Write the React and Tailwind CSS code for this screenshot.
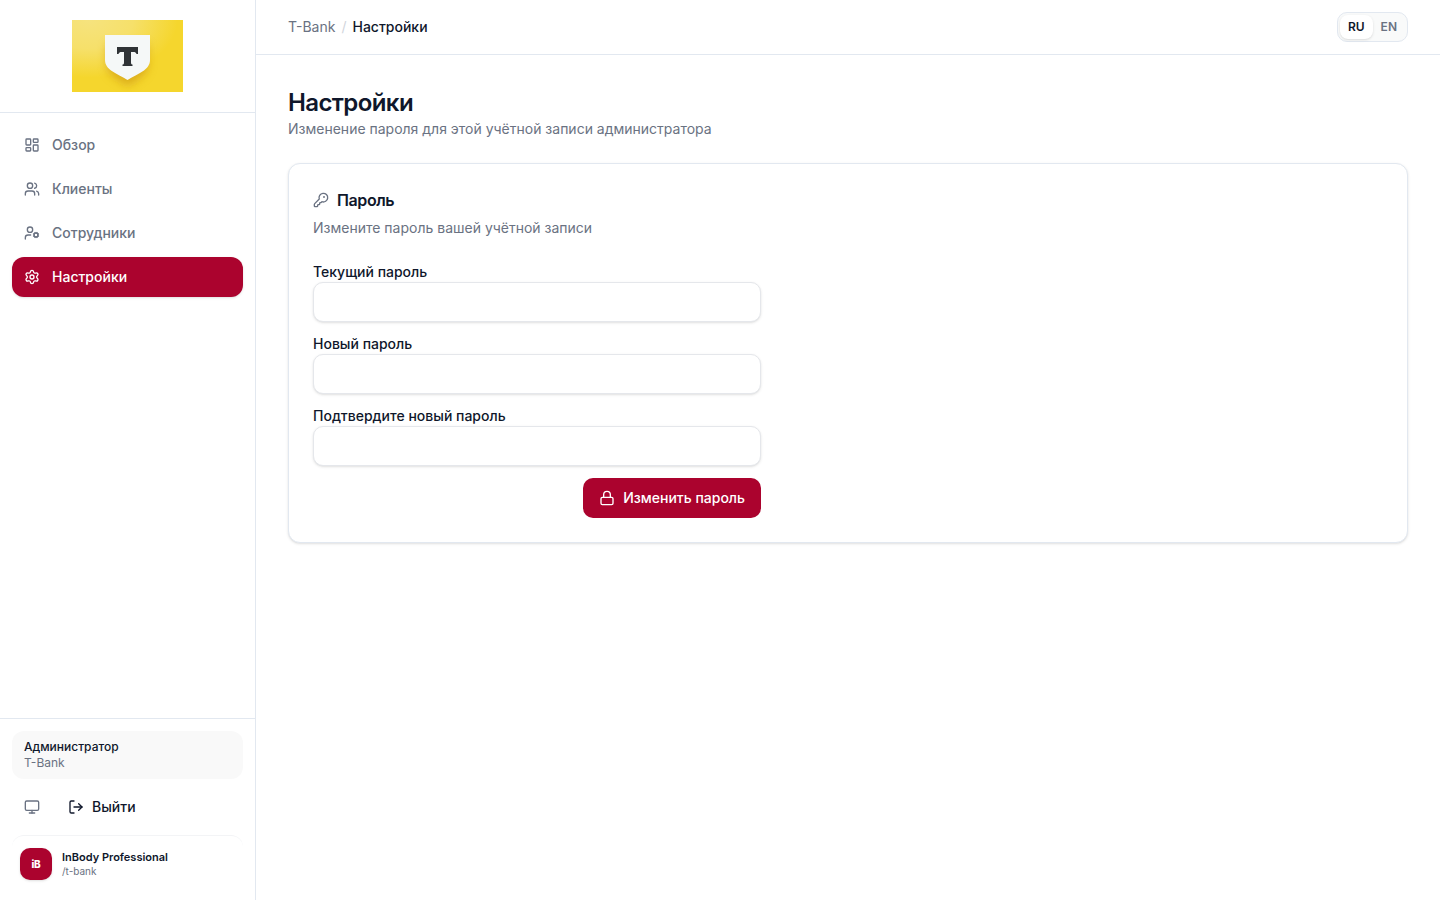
import React, { useState } from 'react';
import {
    LayoutDashboard,
    Users,
    UserCog,
    Settings,
    Monitor,
    LogOut,
    KeyRound,
    Lock,
} from 'lucide-react';

const NAV_ITEMS = [
    { id: 'overview', label: 'Обзор', icon: LayoutDashboard },
    { id: 'clients', label: 'Клиенты', icon: Users },
    { id: 'staff', label: 'Сотрудники', icon: UserCog },
    { id: 'settings', label: 'Настройки', icon: Settings },
];

const FIELDS = [
    { id: 'current-password', label: 'Текущий пароль', autoComplete: 'current-password' },
    { id: 'new-password', label: 'Новый пароль', autoComplete: 'new-password' },
    { id: 'confirm-password', label: 'Подтвердите новый пароль', autoComplete: 'new-password' },
];

const BankLogo = () => (
    <svg width="111" height="72" viewBox="0 0 111 72" role="img" aria-label="T-Bank">
        <defs>
            <radialGradient id="glow" cx="0.15" cy="0" r="0.8">
                <stop offset="0" stopColor="#f6e37e" />
                <stop offset="0.5" stopColor="#f6e06a" />
                <stop offset="1" stopColor="#f5d62d" />
            </radialGradient>
            <filter id="soft" x="-50%" y="-50%" width="200%" height="200%">
                <feGaussianBlur stdDeviation="5" />
            </filter>
        </defs>
        <rect width="111" height="72" fill="url(#glow)" />
        <path d="M35 24h41v22c0 8-12 14-20 20C47 60 35 54 35 46z" fill="#cf9a14" opacity="0.7" filter="url(#soft)" />
        <path d="M33 15h45v25c0 5-3 8-6 10.500C67 54 60 57 55.500 60 51 57 44 54 39 50.500 36 48 33 45 33 40z" fill="#f5f8f8" />
        <path
            d="M45 27h21v7h-1.500c-.5-1.500-1.500-2-3-2H59v10.500c0 1.500.5 2 1.500 2V46h-10v-1.500c1 0 1.500-.5 1.500-2V32h-2.500c-1.500 0-2.500.5-3 2H45z"
            fill="#2f3336"
        />
    </svg>
);

const Sidebar = ({ active, onSelect }) => (
    <aside className="flex w-64 shrink-0 flex-col border-r border-slate-200 bg-white">
        <div className="flex justify-center border-b border-slate-200 py-5">
            <BankLogo />
        </div>

        <nav className="flex flex-1 flex-col gap-1 p-3">
            {NAV_ITEMS.map(({ id, label, icon: Icon }) => (
                <a
                    key={id}
                    href={`#${id}`}
                    onClick={() => onSelect(id)}
                    className={`flex h-10 items-center gap-3 rounded-xl px-3 text-sm font-medium ${
                        active === id ? 'bg-[#ab032e] text-white shadow-sm' : 'text-gray-500 hover:bg-gray-50'
                    }`}
                >
                    <Icon className="size-4" />
                    {label}
                </a>
            ))}
        </nav>

        <div className="border-t border-slate-200 p-3">
            <div className="rounded-xl bg-[#f9f9f9] px-3 py-2 text-xs">
                <p className="font-medium">Администратор</p>
                <p className="text-gray-500">T-Bank</p>
            </div>
            <div className="mt-2 flex items-center gap-1">
                <button type="button" aria-label="Тема" className="flex size-10 items-center justify-center text-gray-500">
                    <Monitor className="size-4" />
                </button>
                <button type="button" className="flex h-10 items-center gap-2 px-3 text-sm font-medium">
                    <LogOut className="size-4" />
                    Выйти
                </button>
            </div>
            <div className="mt-2 flex items-center gap-[10px] rounded-xl border-t border-gray-100 px-2 pt-3 pb-2">
                <span className="flex size-8 items-center justify-center rounded-[10px] bg-[#ab032e] text-[10px] font-extrabold tracking-tight text-white shadow-sm">
                    iB
                </span>
                <div>
                    <p className="text-[11px] leading-[14px] font-semibold">InBody Professional</p>
                    <p className="text-[10px] leading-[15px] text-gray-500">/t-bank</p>
                </div>
            </div>
        </div>
    </aside>
);

const LangSwitch = ({ lang, onChange }) => (
    <div className="flex rounded-[10px] border border-slate-200 bg-[#f9fafa] p-0.5 text-xs font-semibold">
        {['RU', 'EN'].map(code => (
            <button
                key={code}
                type="button"
                onClick={() => onChange(code)}
                className={`h-6 rounded-lg px-2 ${
                    lang === code ? 'bg-white text-slate-900 shadow-sm' : 'text-gray-500'
                }`}
            >
                {code}
            </button>
        ))}
    </div>
);

const PasswordCard = () => (
    <section className="mt-6 rounded-xl border border-slate-200 bg-white p-6 shadow-sm">
        <h2 className="flex items-center gap-2 text-base font-semibold tracking-tight">
            <KeyRound className="size-4 text-gray-500" />
            Пароль
        </h2>
        <p className="mt-1.5 text-sm text-gray-500">Измените пароль вашей учётной записи</p>

        <form className="mt-6 flex max-w-md flex-col gap-3" onSubmit={e => e.preventDefault()}>
            {FIELDS.map(field => (
                <div key={field.id}>
                    <label htmlFor={field.id} className="block text-sm font-medium">
                        {field.label}
                    </label>
                    <input
                        id={field.id}
                        type="password"
                        autoComplete={field.autoComplete}
                        className="block h-10 w-full rounded-[10px] border border-gray-200 bg-white px-3 text-sm shadow-sm outline-none"
                    />
                </div>
            ))}
            <button
                type="submit"
                className="flex h-10 items-center gap-2 self-end rounded-[10px] bg-[#ab032e] px-4 text-sm font-medium text-white"
            >
                <Lock className="size-4" />
                Изменить пароль
            </button>
        </form>
    </section>
);

const App = () => {
    const [active, setActive] = useState('settings');
    const [lang, setLang] = useState('RU');

    return (
        <div className="flex min-h-screen bg-white font-['Inter',sans-serif] text-slate-900">
            <Sidebar active={active} onSelect={setActive} />

            <div className="flex min-w-0 flex-1 flex-col">
                <header className="flex items-center justify-between border-b border-slate-200 bg-white px-8 py-3">
                    <nav className="flex items-center gap-[6px] text-sm">
                        <a href="#overview" className="text-gray-500">T-Bank</a>
                        <span className="text-gray-300">/</span>
                        <span className="font-medium">Настройки</span>
                    </nav>
                    <LangSwitch lang={lang} onChange={setLang} />
                </header>

                <main className="p-8">
                    <h1 className="text-2xl font-semibold tracking-tight">Настройки</h1>
                    <p className="text-sm text-gray-500">Изменение пароля для этой учётной записи администратора</p>
                    <PasswordCard />
                </main>
            </div>
        </div>
    );
};

export default App;
